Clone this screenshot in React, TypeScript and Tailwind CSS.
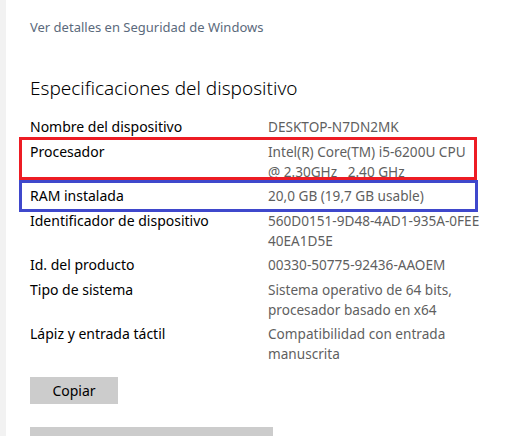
const specs: { label: string; value: string[]; mark?: "red" | "blue" }[] = [
  { label: "Nombre del dispositivo", value: ["DESKTOP-N7DN2MK"] },
  {
    label: "Procesador",
    value: ["Intel(R) Core(TM) i5-6200U CPU", "@ 2.30GHz   2.40 GHz"],
    mark: "red",
  },
  { label: "RAM instalada", value: ["20,0 GB (19,7 GB usable)"], mark: "blue" },
  {
    label: "Identificador de dispositivo",
    value: ["560D0151-9D48-4AD1-935A-0FEE", "40EA1D5E"],
  },
  { label: "Id. del producto", value: ["00330-50775-92436-AAOEM"] },
  {
    label: "Tipo de sistema",
    value: ["Sistema operativo de 64 bits,", "procesador basado en x64"],
  },
  {
    label: "Lápiz y entrada táctil",
    value: ["Compatibilidad con entrada", "manuscrita"],
  },
];

export default function App() {
  return (
    <div
      className="flex h-[436px] w-[531px] overflow-hidden bg-white"
      style={{ fontFamily: '"Noto Sans", "Open Sans", sans-serif' }}
    >
      {/* left edge of the window */}
      <div className="w-[6px] shrink-0 bg-[#f2f2f2]" />

      <div className="flex flex-col pl-[24px]">
        <div className="mt-[17px] text-[13px] leading-[20px] text-[#5b6a7c]">
          Ver detalles en Seguridad de Windows
        </div>

        <h2 className="mt-[37px] text-[19px] font-light leading-[28px] text-black">
          Especificaciones del dispositivo
        </h2>

        <div className="mt-[15px] flex w-[448px] flex-col gap-[4.5px]">
          {specs.map((row) => (
            <div key={row.label} className="relative flex text-[14px] leading-[20px]">
              <div className="w-[238px] shrink-0 text-black">{row.label}</div>
              <div className="whitespace-pre text-[13.6px] text-[#5f5f5f]">
                {row.value.map((line) => (
                  <div key={line}>{line}</div>
                ))}
              </div>
              {row.mark === "red" && (
                <span className="pointer-events-none absolute -left-[11px] -top-[4.5px] bottom-[1.5px] right-[1px] border-[3px] border-[#ed1c24]" />
              )}
              {row.mark === "blue" && (
                <span className="pointer-events-none absolute -left-[11px] -top-[6px] -bottom-[6px] right-0 border-[3px] border-[#3f48cc]" />
              )}
            </div>
          ))}
        </div>

        <button
          type="button"
          className="mt-[13px] h-[32px] w-[88px] bg-[#cccccc] text-[14px] text-black"
        >
          Copiar
        </button>

        <div className="mt-[23px] h-[10px] w-[243px] bg-[#cccccc]" />
      </div>
    </div>
  );
}
